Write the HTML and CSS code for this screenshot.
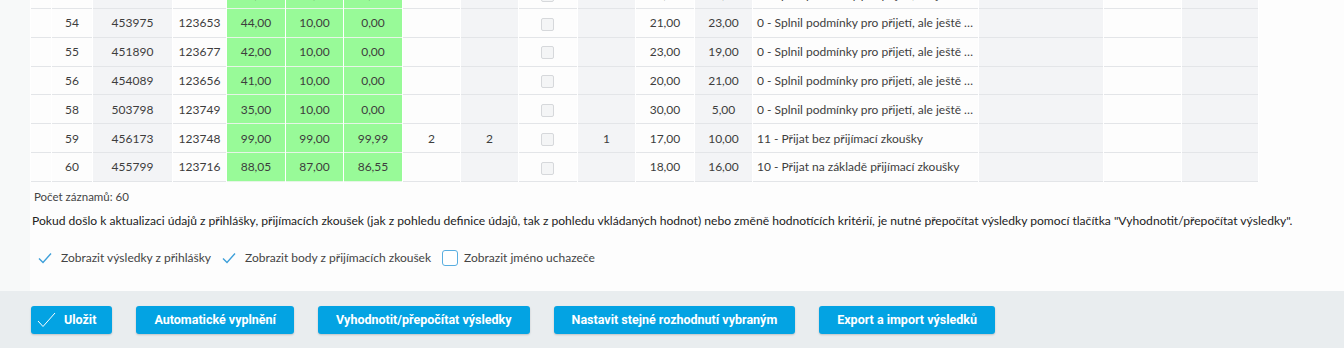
FILE: index.html
```html
<!DOCTYPE html>
<html lang="cs">
<head>
<meta charset="utf-8">
<title>Výsledky</title>
<link rel="stylesheet" href="styles.css">
</head>
<body>
<div class="page">
  <div class="tablewrap">
    <table class="grid">
      <colgroup>
        <col class="c0"><col class="c1"><col class="c2"><col class="c3"><col class="c4"><col class="c5"><col class="c6"><col class="c7"><col class="c8"><col class="c9"><col class="c10"><col class="c11"><col class="c12"><col class="c13"><col class="c14"><col class="c15"><col class="c16">
      </colgroup>
      <tbody>
        <tr>
          <td></td><td>53</td><td class="g">452310</td><td>123699</td>
          <td class="gr">45,00</td><td class="gr">10,00</td><td class="gr">0,00</td>
          <td></td><td class="g"></td><td><span class="cb"></span></td><td class="g"></td>
          <td>22,00</td><td class="g">23,00</td><td class="txt">0 - Splnil podmínky pro přijetí, ale ještě nebyl přijat</td>
          <td class="g"></td><td></td><td class="g"></td>
        </tr>
        <tr>
          <td></td><td>54</td><td class="g">453975</td><td>123653</td>
          <td class="gr">44,00</td><td class="gr">10,00</td><td class="gr">0,00</td>
          <td></td><td class="g"></td><td><span class="cb"></span></td><td class="g"></td>
          <td>21,00</td><td class="g">23,00</td><td class="txt">0 - Splnil podmínky pro přijetí, ale ještě nebyl přijat</td>
          <td class="g"></td><td></td><td class="g"></td>
        </tr>
        <tr>
          <td></td><td>55</td><td class="g">451890</td><td>123677</td>
          <td class="gr">42,00</td><td class="gr">10,00</td><td class="gr">0,00</td>
          <td></td><td class="g"></td><td><span class="cb"></span></td><td class="g"></td>
          <td>23,00</td><td class="g">19,00</td><td class="txt">0 - Splnil podmínky pro přijetí, ale ještě nebyl přijat</td>
          <td class="g"></td><td></td><td class="g"></td>
        </tr>
        <tr>
          <td></td><td>56</td><td class="g">454089</td><td>123656</td>
          <td class="gr">41,00</td><td class="gr">10,00</td><td class="gr">0,00</td>
          <td></td><td class="g"></td><td><span class="cb"></span></td><td class="g"></td>
          <td>20,00</td><td class="g">21,00</td><td class="txt">0 - Splnil podmínky pro přijetí, ale ještě nebyl přijat</td>
          <td class="g"></td><td></td><td class="g"></td>
        </tr>
        <tr>
          <td></td><td>58</td><td class="g">503798</td><td>123749</td>
          <td class="gr">35,00</td><td class="gr">10,00</td><td class="gr">0,00</td>
          <td></td><td class="g"></td><td><span class="cb"></span></td><td class="g"></td>
          <td>30,00</td><td class="g">5,00</td><td class="txt">0 - Splnil podmínky pro přijetí, ale ještě nebyl přijat</td>
          <td class="g"></td><td></td><td class="g"></td>
        </tr>
        <tr>
          <td></td><td>59</td><td class="g">456173</td><td>123748</td>
          <td class="gr">99,00</td><td class="gr">99,00</td><td class="gr">99,99</td>
          <td>2</td><td class="g">2</td><td><span class="cb"></span></td><td class="g">1</td>
          <td>17,00</td><td class="g">10,00</td><td class="txt">11 - Přijat bez přijímací zkoušky</td>
          <td class="g"></td><td></td><td class="g"></td>
        </tr>
        <tr>
          <td></td><td>60</td><td class="g">455799</td><td>123716</td>
          <td class="gr">88,05</td><td class="gr">87,00</td><td class="gr">86,55</td>
          <td></td><td class="g"></td><td><span class="cb"></span></td><td class="g"></td>
          <td>18,00</td><td class="g">16,00</td><td class="txt">10 - Přijat na základě přijímací zkoušky</td>
          <td class="g"></td><td></td><td class="g"></td>
        </tr>
      </tbody>
    </table>
  </div>

  <p class="count">Počet záznamů: 60</p>
  <p class="note">Pokud došlo k aktualizaci údajů z přihlášky, přijímacích zkoušek (jak z pohledu definice údajů, tak z pohledu vkládaných hodnot) nebo změně hodnotících kritérií, je nutné přepočítat výsledky pomocí tlačítka "Vyhodnotit/přepočítat výsledky".</p>

  <div class="options">
    <label class="opt">
      <svg class="tick" width="14" height="12" viewBox="0 0 14 12"><path d="M1 6.5 L5 10.5 L13 1.5" fill="none" stroke="#3d9fd9" stroke-width="1.4"/></svg>
      <span>Zobrazit výsledky z přihlášky</span>
    </label>
    <label class="opt">
      <svg class="tick" width="14" height="12" viewBox="0 0 14 12"><path d="M1 6.5 L5 10.5 L13 1.5" fill="none" stroke="#3d9fd9" stroke-width="1.4"/></svg>
      <span>Zobrazit body z přijímacích zkoušek</span>
    </label>
    <label class="opt">
      <span class="box"></span>
      <span>Zobrazit jméno uchazeče</span>
    </label>
  </div>
</div>

<div class="footer">
  <button class="btn save">
    <svg width="19" height="16" viewBox="0 0 19 16"><path d="M1 9 L6 14.5 L18 1" fill="none" stroke="#fff" stroke-width="1"/></svg>
    <span>Uložit</span>
  </button>
  <button class="btn">Automatické vyplnění</button>
  <button class="btn">Vyhodnotit/přepočítat výsledky</button>
  <button class="btn">Nastavit stejné rozhodnutí vybraným</button>
  <button class="btn">Export a import výsledků</button>
</div>
</body>
</html>
```
FILE: styles.css
```css
html, body {
  margin: 0;
  padding: 0;
}
body {
  width: 1344px;
  height: 348px;
  overflow: hidden;
  background: #fcfdfd;
  font-family: Lato, "Noto Sans", sans-serif;
  color: #3a3a3a;
  display: flex;
  flex-direction: column;
}
.page {
  flex: 1;
  background: linear-gradient(to right, #f7f9f9 0, #f7f9f9 30px, #fdfdfd 30px);
}
.tablewrap {
  padding-left: 30px;
  margin-top: -19.8px;
}
.grid {
  table-layout: fixed;
  width: 1229px;
  border-collapse: separate;
  border-spacing: 1px 0;
  background: #ffffff;
  font-size: 12px;
}
.c0 { width: 20px; }
.c1 { width: 40px; }
.c2 { width: 79px; }
.c3 { width: 53px; }
.c4 { width: 58px; }
.c5 { width: 57px; }
.c6 { width: 58px; }
.c7, .c8, .c10, .c12 { width: 57px; }
.c9, .c11 { width: 58px; }
.c13 { width: 225px; }
.c14 { width: 124px; }
.c15 { width: 77px; }
.c16 { width: 76px; }
.grid td {
  height: 27.8px;
  padding: 0;
  text-align: center;
  vertical-align: middle;
  background: #fdfdfd;
  border-bottom: 1px solid #e3e5e8;
  white-space: nowrap;
  overflow: hidden;
  color: #3d3d3d;
}
.grid td.g {
  background: #f3f4f6;
}
.grid td.gr {
  background: #98fa98;
  border-bottom-color: #e6f5e6;
}
.grid td.txt {
  text-align: left;
  padding-left: 4px;
  text-overflow: ellipsis;
}
.cb {
  display: inline-block;
  width: 11px;
  height: 11px;
  border: 1px solid #d6d8db;
  border-radius: 2px;
  background: #f4f5f6;
  vertical-align: middle;
  margin-left: -2px;
}
.count {
  margin: 7px 0 0;
  padding-left: 34px;
  font-size: 11.5px;
  line-height: 16px;
  color: #444;
}
.note {
  margin: 8px 0 0;
  padding-left: 32px;
  font-size: 12.1px;
  line-height: 16px;
  color: #222;
  white-space: nowrap;
}
.options {
  display: flex;
  align-items: center;
  gap: 11px;
  margin: 19px 0 0;
  padding-left: 38px;
  height: 20px;
  font-size: 12px;
  color: #444;
}
.opt {
  display: flex;
  align-items: center;
  gap: 9px;
}
.tick {
  display: block;
}
.box {
  width: 14px;
  height: 14px;
  border: 1.5px solid #59aee0;
  border-radius: 3px;
  background: #fff;
  margin-right: -3px;
}
.footer {
  height: 57px;
  flex: none;
  background: #e9edef;
  display: flex;
  align-items: center;
  gap: 24px;
  padding: 0 31px;
  box-sizing: border-box;
}
.btn {
  height: 28px;
  padding: 0 18px;
  border: 0;
  border-radius: 3px;
  background: #03a3e3;
  color: #fff;
  font-family: Roboto, "Liberation Sans", sans-serif;
  font-weight: bold;
  font-size: 12.5px;
  box-shadow: 0 1px 2px rgba(0, 0, 0, 0.18);
  display: flex;
  align-items: center;
}
.btn.save {
  padding: 0 16px 0 6px;
  gap: 8px;
}
.btn.save svg {
  display: block;
}
```
